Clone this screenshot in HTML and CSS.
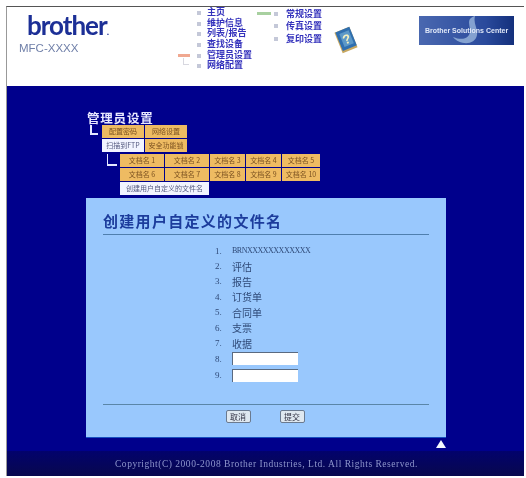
FILE: index.html
```html
<!DOCTYPE html>
<html lang="zh-CN">
<head>
    <meta charset="UTF-8">
    <meta name="viewport" content="width=device-width, initial-scale=1.0">
    <title>创建用户自定义的文件名</title>
    <link rel="stylesheet" href="styles.css">
</head>
<body>
    <div class="frame">
        <!-- 顶部 -->
        <div class="header">
            <div class="brand">
                <div class="logo">brother<span class="logo-dot">.</span></div>
                <div class="model">MFC-XXXX</div>
            </div>
            <div class="nav nav-one">
                <div class="nav-marks">
                    <span class="marker marker-orange"></span>
                    <span class="elbow"></span>
                </div>
                <ul class="nav-list">
                    <li><a href="#">主页</a></li>
                    <li><a href="#">维护信息</a></li>
                    <li><a href="#">列表/报告</a></li>
                    <li><a href="#">查找设备</a></li>
                    <li><a href="#">管理员设置</a></li>
                    <li><a href="#">网络配置</a></li>
                </ul>
            </div>
            <div class="nav nav-two">
                <span class="marker marker-green"></span>
                <ul class="nav-list">
                    <li><a href="#">常规设置</a></li>
                    <li><a href="#">传真设置</a></li>
                    <li><a href="#">复印设置</a></li>
                </ul>
            </div>
            <svg class="help" width="26" height="28" viewBox="0 0 26 28">
                <g transform="rotate(-22 13 14)">
                    <rect x="5" y="3" width="16" height="22" fill="#c8a860"/>
                    <rect x="6" y="3" width="15" height="20" fill="#2f6fb0"/>
                    <rect x="9" y="6" width="10" height="14" fill="#5c98c8"/>
                    <text x="14" y="18" font-family="Liberation Sans, sans-serif" font-size="13" font-weight="bold" fill="#f4f0c0" text-anchor="middle">?</text>
                </g>
            </svg>
            <a class="solutions" href="#">
                <svg class="swirl" width="40" height="29" viewBox="0 0 40 29">
                    <path d="M30 0C22 2 24 8 25 13C26 20 20 26 8 21C14 29 30 30 32 19C33 12 28 8 30 0Z" fill="#a8c4e4" opacity="0.7"/>
                </svg>
                <span class="solutions-text">Brother Solutions Center</span>
            </a>
        </div>

        <!-- 主体 -->
        <div class="main">
            <h2 class="section-title">管理员设置</h2>
            <div class="tab-area">
                <span class="bracket"></span>
                <div class="tabs tabs-top">
                    <a class="tab" href="#">配置密码</a>
                    <a class="tab" href="#">网络设置</a>
                    <a class="tab tab-on" href="#">扫描到FTP</a>
                    <a class="tab" href="#">安全功能锁</a>
                </div>
            </div>
            <div class="tab-area tab-area-sub">
                <span class="bracket bracket-sub"></span>
                <div>
                    <div class="tabs tabs-sub">
                        <a class="tab" href="#">文档名 1</a>
                        <a class="tab" href="#">文档名 2</a>
                        <a class="tab" href="#">文档名 3</a>
                        <a class="tab" href="#">文档名 4</a>
                        <a class="tab" href="#">文档名 5</a>
                        <a class="tab" href="#">文档名 6</a>
                        <a class="tab" href="#">文档名 7</a>
                        <a class="tab" href="#">文档名 8</a>
                        <a class="tab" href="#">文档名 9</a>
                        <a class="tab" href="#">文档名 10</a>
                    </div>
                    <a class="tab tab-on tab-wide" href="#">创建用户自定义的文件名</a>
                </div>
            </div>

            <div class="panel">
                <h1>创建用户自定义的文件名</h1>
                <ol class="names">
                    <li><span class="num">1.</span><span class="mono">BRNXXXXXXXXXXXX</span></li>
                    <li><span class="num">2.</span>评估</li>
                    <li><span class="num">3.</span>报告</li>
                    <li><span class="num">4.</span>订货单</li>
                    <li><span class="num">5.</span>合同单</li>
                    <li><span class="num">6.</span>支票</li>
                    <li><span class="num">7.</span>收据</li>
                    <li class="field"><span class="num">8.</span><input type="text"></li>
                    <li class="field"><span class="num">9.</span><input type="text"></li>
                </ol>
                <div class="actions">
                    <button>取消</button>
                    <button>提交</button>
                </div>
            </div>
            <div class="to-top"><span class="triangle"></span></div>
        </div>

        <div class="footer">Copyright(C) 2000-2008 Brother Industries, Ltd. All Rights Reserved.</div>
    </div>
</body>
</html>
```

FILE: styles.css
```css
body {
    margin: 0;
    background-color: #fff;
    font-family: "Liberation Serif", "Noto Sans CJK SC", serif;
}

.frame {
    width: 518px;
    height: 470px;
    margin: 6px 0 0 6px;
    display: flex;
    flex-direction: column;
    border-top: 1px solid #555;
    border-left: 1px solid #999;
    box-sizing: border-box;
    overflow: hidden;
    filter: blur(0.6px);
}

.header {
    height: 79px;
    flex-shrink: 0;
    display: flex;
    background-color: #fff;
}

.brand {
    width: 171px;
    padding: 5px 0 0 12px;
    box-sizing: border-box;
}

.logo {
    margin-left: 8px;
    font-family: "Lato", "Liberation Sans", sans-serif;
    font-size: 26px;
    line-height: 26px;
    font-weight: 700;
    letter-spacing: -1px;
    color: #1c2f96;
}

.logo-dot {
    font-size: 10px;
}

.model {
    margin-top: -3px;
    font-family: "Liberation Sans", sans-serif;
    font-size: 11.5px;
    line-height: 14px;
    color: #6f7fa8;
}

.nav {
    display: flex;
}

.nav-one {
    width: 79px;
}

.nav-marks {
    width: 19px;
    padding-top: 47px;
}

.nav-list {
    list-style: none;
    margin: 0;
    padding: 0;
}

.nav-list li {
    position: relative;
    padding-left: 10px;
    font-size: 9px;
    font-weight: bold;
    white-space: nowrap;
    font-family: "Noto Sans CJK SC", sans-serif;
}

.nav-list li::before {
    content: "";
    position: absolute;
    left: 0;
    top: 4px;
    width: 4px;
    height: 4px;
    background-color: #c4c8d8;
}

.nav-list a {
    color: #3432bc;
    text-decoration: none;
}

.nav-one .nav-list li {
    height: 10.7px;
    line-height: 10.7px;
}

.nav-two {
    width: 80px;
    padding-top: 1px;
}

.nav-two .nav-list {
    margin-left: 3px;
}

.nav-two .nav-list li {
    height: 12.4px;
    line-height: 12.4px;
    padding-left: 12px;
}

.marker {
    display: block;
    width: 12px;
    height: 3px;
}

.marker-orange {
    background-color: #f0a890;
}

.marker-green {
    width: 14px;
    margin-top: 4px;
    background-color: #a8d0a0;
}

.elbow {
    display: block;
    width: 5px;
    height: 6px;
    margin: 1px 0 0 5px;
    border-left: 1px solid #d8d8e0;
    border-bottom: 1px solid #d8d8e0;
}

.help {
    margin: 19px 0 0 -4px;
}

.solutions {
    position: relative;
    width: 95px;
    height: 29px;
    margin: 9px 0 0 60px;
    display: flex;
    align-items: center;
    justify-content: center;
    background: linear-gradient(90deg, #4a68b0, #2a4a9c 70%, #14307c);
    text-decoration: none;
}

.swirl {
    position: absolute;
    left: 26px;
    top: 0;
}

.solutions-text {
    position: relative;
    font-family: "Liberation Sans", sans-serif;
    font-size: 7px;
    font-weight: bold;
    color: #e0e8f8;
    white-space: nowrap;
}

.main {
    flex: 1;
    padding-top: 24px;
    background-color: #00008c;
}

.section-title {
    margin: 0 0 0 80px;
    font-family: "Noto Sans CJK SC", sans-serif;
    font-size: 12.5px;
    letter-spacing: 0.8px;
    line-height: 15px;
    font-weight: bold;
    color: #e8e8ff;
}

.tab-area {
    display: flex;
    margin-left: 83px;
}

.tab-area-sub {
    margin-left: 100px;
    margin-top: 2px;
}

.bracket {
    width: 8px;
    height: 10px;
    margin: 0 4px 0 0;
    border-left: 2px solid #e4e8ff;
    border-bottom: 2px solid #e4e8ff;
    box-sizing: border-box;
}

.bracket-sub {
    width: 10px;
    height: 12px;
    margin: 0 3px 0 0;
    border-width: 1px;
    border-bottom-width: 2px;
}

.tabs {
    display: grid;
    gap: 1px;
}

.tabs-top {
    grid-template-columns: 42px 42px;
    grid-auto-rows: 13px;
}

.tabs-sub {
    grid-template-columns: 44px 44px 35px 35px 38px;
    grid-auto-rows: 13px;
    column-gap: 1px;
}

.tab {
    display: block;
    background-color: #eebb62;
    color: #7a5020;
    font-family: "Noto Sans CJK SC", sans-serif;
    font-size: 7px;
    line-height: 13px;
    text-align: center;
    text-decoration: none;
    white-space: nowrap;
    overflow: hidden;
}

.tab-on {
    background-color: #f2f4ff;
    color: #555a80;
}

.tab-wide {
    width: 89px;
    height: 13px;
    margin-top: 1px;
}

.panel {
    width: 360px;
    height: 240px;
    margin: 3px 0 0 79px;
    padding: 12px 17px 0;
    box-sizing: border-box;
    background-color: #99c8fd;
    border-bottom: 1px solid #1850c0;
}

.panel h1 {
    margin: 0;
    height: 24px;
    font-family: "Noto Sans CJK SC", sans-serif;
    font-size: 15px;
    line-height: 22px;
    letter-spacing: 1.3px;
    font-weight: bold;
    color: #1c3c9c;
    border-bottom: 1px solid #4f7fae;
}

.names {
    list-style: none;
    height: 161px;
    margin: 0;
    padding: 8px 0 0 112px;
    border-bottom: 1px solid #5a86a8;
    font-family: "Noto Sans CJK SC", sans-serif;
    font-size: 10px;
    color: #2f4a78;
}

.names li {
    display: flex;
    align-items: center;
    height: 15.4px;
}

.names .field {
    height: 16.5px;
}

.num {
    width: 17px;
    font-family: "Liberation Serif", serif;
    font-size: 9px;
}

.mono {
    font-family: "Liberation Serif", serif;
    font-size: 8px;
    letter-spacing: -0.5px;
}

.names input {
    width: 66px;
    height: 13px;
    padding: 0;
    box-sizing: border-box;
    background-color: #fff;
    border: none;
    border-top: 1px solid #5a6a80;
    border-left: 1px solid #5a6a80;
}

.actions {
    display: flex;
    justify-content: center;
    gap: 29px;
    padding: 5px 2px 0 0;
}

.actions button {
    width: 25px;
    height: 13px;
    padding: 0;
    background-color: #dfe8f0;
    color: #334;
    border: 1px solid #6a7a90;
    border-radius: 2px;
    font-family: "Noto Sans CJK SC", sans-serif;
    font-size: 8px;
    line-height: 11px;
}

.to-top {
    display: flex;
    justify-content: flex-end;
    width: 439px;
    padding-top: 2px;
}

.triangle {
    width: 0;
    height: 0;
    border-left: 5px solid transparent;
    border-right: 5px solid transparent;
    border-bottom: 8px solid #f4f8ff;
}

.footer {
    height: 25px;
    flex-shrink: 0;
    background: linear-gradient(180deg, #02026c, #08084e);
    color: #8e96cc;
    font-size: 9.5px;
    letter-spacing: 0.52px;
    line-height: 27px;
    padding-left: 108px;
    white-space: nowrap;
}
```
